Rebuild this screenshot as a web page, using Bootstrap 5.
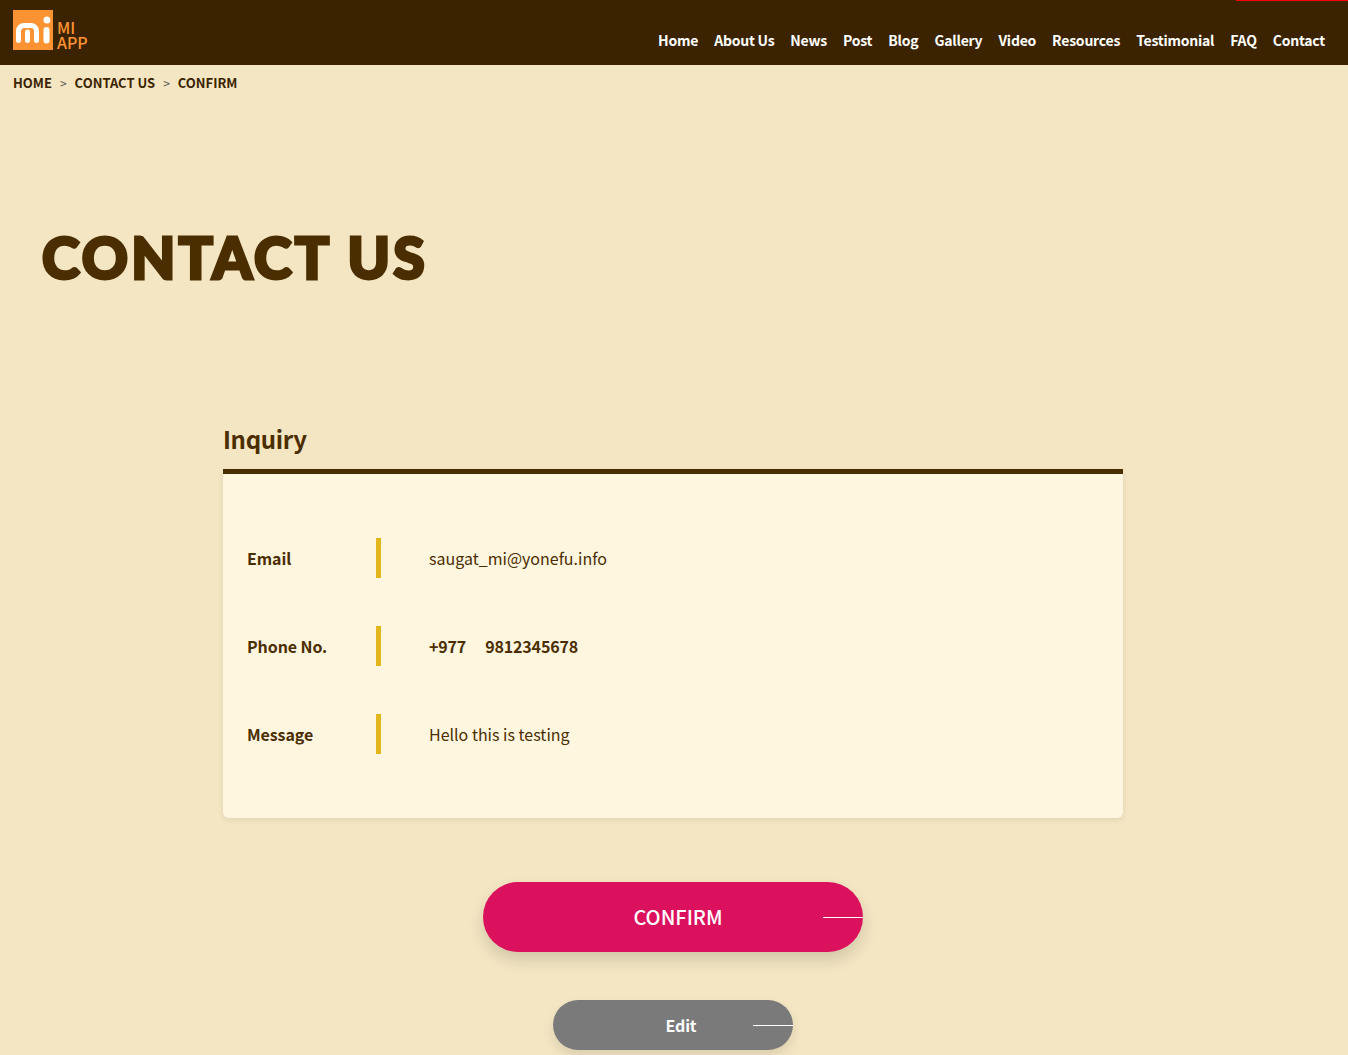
<!DOCTYPE html>
<html lang="en">
<head>
<meta charset="utf-8">
<title>Contact Us</title>
<link href="https://cdn.jsdelivr.net/npm/bootstrap@5.3.0/dist/css/bootstrap.min.css" rel="stylesheet">
<style>
html,body{height:1055px;overflow:hidden}
body{background:#f4e6c3;color:#4b2e00;font-family:"Noto Sans CJK JP","Noto Sans",sans-serif;font-size:16px}
.topbar{height:65px;background:#3b2300;position:relative;padding:10px 13px 0}
.topmark{position:absolute;top:0;right:0;width:112px;height:1px;background:#f00}
.logobox{width:40px;height:40px;background:#fb9333}
.logotext{color:#fb9333;font-size:16px;font-weight:500;line-height:15px;margin-left:4px;margin-top:10px}
.menu-wrap{position:absolute;right:23px;top:30px;gap:16px}
.menu-wrap a{color:#fff;font-size:14px;font-weight:700;letter-spacing:-.23px;line-height:21px;text-decoration:none}
.crumbs{padding:8px 13px 0;font-size:13px;font-weight:700;line-height:20px;color:#3b2300}
.crumbs i{font-style:normal;font-weight:400;margin:0 8px;font-size:12px;color:#555}
.pagehead{font-family:Lato,sans-serif;font-weight:900;font-size:57px;line-height:72px;color:#4b2e00;margin:128px 0 0 42px;-webkit-text-stroke:3px #4b2e00;letter-spacing:3.200px}
.formwrap{width:900px;margin:128px 0 0 223px}
.formtitle{font-size:24px;font-weight:700;letter-spacing:-.3px;line-height:36px;margin:0 0 12px;color:#4b2e00}
.sheet{background:#fff6e0;border-top:5px solid #4b2e00;border-radius:0 0 6px 6px;box-shadow:0 2px 6px rgba(0,0,0,.08);height:349px;padding:64px 24px 0}
.datarow{height:40px;margin-bottom:48px;font-size:16px}
.datalabel{width:129px;font-weight:700;letter-spacing:-.1px;margin:0}
.databar{width:5px;height:40px;background:#e3b51d}
.datavalue{margin-left:48px;color:#4b2e00}
.strong-val{font-weight:700;letter-spacing:-.15px;gap:19px}
.pillbtn{display:flex;align-items:center;justify-content:center;position:relative;color:#fff;border-radius:40px;border:0;padding:0;text-decoration:none}
.pillbtn::after{content:"";position:absolute;right:0;top:50%;width:40px;height:1px;background:#fff}
.pill-confirm{width:380px;height:70px;background:#db115e;font-size:20px;font-weight:500;margin:64px auto 0;box-shadow:0 8px 16px rgba(0,0,0,.14)}
.pill-confirm span{margin-left:10px}
.pill-edit{width:240px;height:50px;background:#7a7a7a;font-size:16px;font-weight:700;letter-spacing:-.2px;margin:48px auto 0;box-shadow:0 6px 12px rgba(0,0,0,.1)}
.pill-edit span{margin-left:16px}
</style>
</head>
<body>
<header class="topbar">
  <div class="topmark"></div>
  <a href="#" class="d-inline-flex text-decoration-none">
    <span class="logobox d-block">
      <svg width="40" height="40" viewBox="0 0 40 40"><path d="M5.500 30.500V21a5.500 5.500 0 0 1 5.500-5.500h7a5.500 5.500 0 0 1 5.500 5.500v9.500M14.500 22v8.500" fill="none" stroke="#fff" stroke-width="5" stroke-linecap="round"/><path d="M33.500 20v10.500" fill="none" stroke="#fff" stroke-width="6" stroke-linecap="round"/><circle cx="34" cy="10" r="3.500" fill="#fff"/><path d="M35.500 6a4.500 4.500 0 0 1 2.500 4.500" fill="none" stroke="#fb9333" stroke-width="1"/></svg>
    </span>
    <span class="logotext">MI<br>APP</span>
  </a>
  <nav class="menu-wrap d-flex">
    <a href="#">Home</a><a href="#">About Us</a><a href="#">News</a><a href="#">Post</a><a href="#">Blog</a><a href="#">Gallery</a><a href="#">Video</a><a href="#">Resources</a><a href="#">Testimonial</a><a href="#">FAQ</a><a href="#">Contact</a>
  </nav>
</header>
<div class="crumbs">HOME<i>&gt;</i>CONTACT US<i>&gt;</i>CONFIRM</div>
<h1 class="pagehead">CONTACT US</h1>
<main class="formwrap">
  <h2 class="formtitle">Inquiry</h2>
  <div class="sheet">
    <div class="datarow d-flex align-items-center"><p class="datalabel">Email</p><div class="databar"></div><div class="datavalue">saugat_mi@yonefu.info</div></div>
    <div class="datarow d-flex align-items-center"><p class="datalabel">Phone No.</p><div class="databar"></div><div class="datavalue strong-val d-flex"><span>+977</span><span>9812345678</span></div></div>
    <div class="datarow d-flex align-items-center"><p class="datalabel">Message</p><div class="databar"></div><div class="datavalue">Hello this is testing</div></div>
  </div>
  <a href="#" class="pillbtn pill-confirm"><span>CONFIRM</span></a>
  <a href="#" class="pillbtn pill-edit"><span>Edit</span></a>
</main>
<script src="https://cdn.jsdelivr.net/npm/bootstrap@5.3.0/dist/js/bootstrap.bundle.min.js"></script>
</body>
</html>
